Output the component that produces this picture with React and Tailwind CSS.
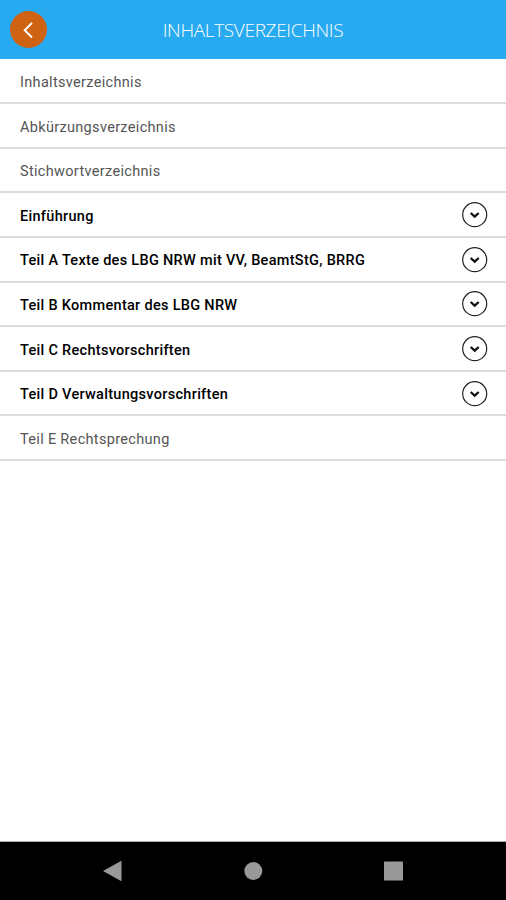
const entries = [
  { title: "Inhaltsverzeichnis" },
  { title: "Abkürzungsverzeichnis" },
  { title: "Stichwortverzeichnis" },
  { title: "Einführung", expandable: true },
  { title: "Teil A Texte des LBG NRW mit VV, BeamtStG, BRRG", expandable: true },
  { title: "Teil B Kommentar des LBG NRW", expandable: true },
  { title: "Teil C Rechtsvorschriften", expandable: true },
  { title: "Teil D Verwaltungsvorschriften", expandable: true },
  { title: "Teil E Rechtsprechung" },
];

const ExpandIcon = () => (
  <svg className="size-[26px]" viewBox="0 0 26 26" fill="none" stroke="#222">
    <circle cx="12.7" cy="12.7" r="12" strokeWidth="1.2" />
    <path d="M8.7 11l4 3.6 4-3.6" stroke="#111" strokeWidth="2.3" />
  </svg>
);

const Header = () => (
  <header className="grid h-[59px] shrink-0 grid-cols-[48px_1fr_48px] items-center bg-[#27aaf0]">
    <button className="ml-[10px] flex size-[37px] items-center justify-center rounded-full bg-[#cf6213]">
      <svg className="size-5" viewBox="0 0 20 20" fill="none" stroke="white">
        <path d="M13 2.9L5.7 10.2l7.3 7.3" strokeWidth="2" />
      </svg>
    </button>
    <h1 className="pt-0.5 text-center font-['Open_Sans',sans-serif] text-[19px] font-light tracking-[-0.35px] text-white">
      INHALTSVERZEICHNIS
    </h1>
  </header>
);

const Entry = ({ entry }) => (
  <li className="flex h-[44.6px] items-center justify-between border-b-2 border-[#dcdcdc] pt-px pr-[18px] pl-5">
    <span
      className={
        entry.expandable
          ? "pt-[3px] text-[14.5px] font-medium tracking-[0.3px] text-black"
          : "pt-[3px] text-[14.5px] tracking-[0.32px] text-[#555]"
      }
    >
      {entry.title}
    </span>
    {entry.expandable ? <ExpandIcon /> : null}
  </li>
);

const NavBar = () => (
  <nav className="flex h-[59px] shrink-0 items-center justify-between border-t border-[#aaa] bg-black px-[102px]">
    <svg className="size-5" viewBox="0 0 20 20" fill="#999">
      <path d="M1 10L19.5 -0.3v20.6z" />
    </svg>
    <svg className="size-5" viewBox="0 0 20 20" fill="#999">
      <circle cx="10.3" cy="10" r="9" />
    </svg>
    <svg className="size-5" viewBox="0 0 20 20" fill="#999">
      <rect x="0" y="0.5" width="19" height="19" rx="0.5" />
    </svg>
  </nav>
);

const App = () => {
  return (
    <div className="flex h-[900px] w-[506px] flex-col overflow-hidden bg-white font-[Roboto,sans-serif]">
      <Header />
      <ul className="flex-1 pt-[0.6px]">
        {entries.map((entry) => (
          <Entry key={entry.title} entry={entry} />
        ))}
      </ul>
      <NavBar />
    </div>
  );
};

export default App;
